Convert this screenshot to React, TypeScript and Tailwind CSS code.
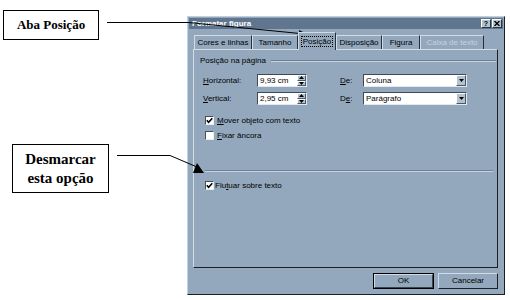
import React from "react";

const Check = ({ checked }: { checked?: boolean }) => (
  <span className="w-[9px] h-[9px] shrink-0 bg-white border border-t-[#41515f] border-l-[#41515f] border-r-[#e6edf3] border-b-[#e6edf3] flex items-center justify-center">
    {checked && (
      <svg width="7" height="7" viewBox="0 0 7 7">
        <path d="M0.8 3.2 L2.6 5.2 L6.3 1.2" stroke="#000" strokeWidth="1.6" fill="none" />
      </svg>
    )}
  </span>
);

const Arrow = ({ up }: { up?: boolean }) => (
  <svg width="5" height="3" viewBox="0 0 5 3">
    <path d={up ? "M2.5 0 L5 3 L0 3 Z" : "M0 0 L5 0 L2.5 3 Z"} fill="#000" />
  </svg>
);

const Spin = ({ value }: { value: string }) => (
  <div className="w-[50px] h-[13px] bg-white border border-t-[#3d4b59] border-l-[#3d4b59] border-r-[#e2e9f0] border-b-[#e2e9f0] flex items-center">
    <span className="flex-1 pl-[2px] leading-[10px]">{value}</span>
    <div className="flex flex-col w-[9px] h-full">
      <span className="flex-1 bg-[#b4c2d0] border-t border-l border-t-white border-l-white border-b border-r border-b-[#4a5866] border-r-[#4a5866] flex items-center justify-center">
        <Arrow up />
      </span>
      <span className="flex-1 bg-[#b4c2d0] border-t border-l border-t-white border-l-white border-b border-r border-b-[#4a5866] border-r-[#4a5866] flex items-center justify-center">
        <Arrow />
      </span>
    </div>
  </div>
);

const Select = ({ value }: { value: string }) => (
  <div className="w-[104px] h-[13px] bg-white border border-t-[#3d4b59] border-l-[#3d4b59] border-r-[#e2e9f0] border-b-[#e2e9f0] flex items-center">
    <span className="flex-1 pl-[2px] leading-[10px]">{value}</span>
    <span className="w-[10px] h-full bg-[#b4c2d0] border-t border-l border-t-white border-l-white border-b border-r border-b-[#4a5866] border-r-[#4a5866] flex items-center justify-center">
      <Arrow />
    </span>
  </div>
);

const tabs = [
  { label: "Cores e linhas", w: "w-[58px]" },
  { label: "Tamanho", w: "w-[46px]" },
  { label: "Posição", w: "w-[38px]", active: true },
  { label: "Disposição", w: "w-[46px]" },
  { label: "Figura", w: "w-[38px]" },
  { label: "Caixa de texto", w: "w-[64px]", disabled: true },
];

export default function App() {
  return (
    <div className="relative w-[510px] h-[300px] bg-white overflow-hidden font-['Liberation_Sans',sans-serif]">
      <div className="pl-[187px] pt-[16px]">
        {/* dialog window */}
        <div className="w-[318px] h-[279px] bg-[#94a8bd] border border-t-[#c3cfdb] border-l-[#c3cfdb] border-r-[#1b1f24] border-b-[#1b1f24] p-[1px] flex flex-col text-[8px] text-black">
          <div className="h-[11px] bg-[#5f768e] flex items-center justify-between pl-[3px] pr-[1px]">
            <span className="text-white font-bold leading-[10px]">Formatar figura</span>
            <div className="flex gap-[1px]">
              <span className="w-[10px] h-[9px] bg-[#b4c2d0] border border-t-white border-l-white border-r-[#2a323a] border-b-[#2a323a] flex items-center justify-center font-bold text-[7px] leading-none">
                ?
              </span>
              <span className="w-[10px] h-[9px] bg-[#b4c2d0] border border-t-white border-l-white border-r-[#2a323a] border-b-[#2a323a] flex items-center justify-center">
                <svg width="6" height="5" viewBox="0 0 6 5">
                  <path d="M0.5 0 L5.5 5 M5.5 0 L0.5 5" stroke="#000" strokeWidth="1.3" />
                </svg>
              </span>
            </div>
          </div>

          {/* tabs */}
          <div className="h-[20px] flex items-end pl-[5px] relative z-10">
            {tabs.map((t) =>
              t.active ? (
                <div
                  key={t.label}
                  className={`${t.w} h-[18px] -mb-[1px] bg-[#94a8bd] border-t border-l border-t-[#d2dce6] border-l-[#d2dce6] border-r border-r-[#26303a] flex items-center justify-center`}
                >
                  <span className="border border-dotted border-black px-[1px] leading-[9px]">{t.label}</span>
                </div>
              ) : (
                <div
                  key={t.label}
                  className={`${t.w} h-[14px] bg-[#94a8bd] border-t border-l border-t-[#d2dce6] border-l-[#d2dce6] border-r border-r-[#26303a] flex items-center justify-center ${
                    t.disabled ? "text-[#c7d2dd]" : ""
                  }`}
                >
                  {t.label}
                </div>
              )
            )}
          </div>

          {/* panel */}
          <div className="ml-[4px] w-[305px] h-[219px] border border-t-[#d2dce6] border-l-[#d2dce6] border-r-[#1b1f24] border-b-[#1b1f24] flex flex-col leading-[10px]">
            <div className="flex items-center mt-[6px] pl-[6px] pr-[1px]">
              <span>Posição na página</span>
              <div className="flex-1 ml-[5px] border-t border-t-[#6b7f94] border-b border-b-[#c8d4e0]" />
            </div>

            <div className="mt-[8px] flex flex-col gap-[5px] pl-[9px]">
              <div className="flex items-center h-[13px]">
                <span className="w-[54px]">
                  <u>H</u>orizontal:
                </span>
                <Spin value="9,93 cm" />
                <span className="ml-[33px] w-[23px]">
                  <u>D</u>e:
                </span>
                <Select value="Coluna" />
              </div>
              <div className="flex items-center h-[13px]">
                <span className="w-[54px]">
                  <u>V</u>ertical:
                </span>
                <Spin value="2,95 cm" />
                <span className="ml-[33px] w-[23px]">
                  D<u>e</u>:
                </span>
                <Select value="Parágrafo" />
              </div>
            </div>

            <div className="mt-[11px] pl-[11px] flex items-center gap-[3px] h-[9px]">
              <Check checked />
              <span>
                <u>M</u>over objeto com texto
              </span>
            </div>
            <div className="mt-[6px] pl-[11px] flex items-center gap-[3px] h-[9px]">
              <Check />
              <span>
                <u>F</u>ixar âncora
              </span>
            </div>

            <div className="mt-[30px] ml-[11px] mr-[4px] border-t border-t-[#6b7f94] border-b border-b-[#c8d4e0]" />

            <div className="mt-[9px] pl-[11px] flex items-center gap-[1px] h-[9px]">
              <Check checked />
              <span>
                Flu<u>t</u>uar sobre texto
              </span>
            </div>
          </div>

          {/* buttons */}
          <div className="mt-[5px] flex justify-end gap-[4px] pr-[5px]">
            <div className="w-[61px] h-[16px] border border-black">
              <div className="w-full h-full border border-t-[#d2dce6] border-l-[#d2dce6] border-r-[#3a4652] border-b-[#3a4652] flex items-center justify-center">
                OK
              </div>
            </div>
            <div className="w-[60px] h-[16px] border border-t-[#d2dce6] border-l-[#d2dce6] border-r-[#1b1f24] border-b-[#1b1f24] flex items-center justify-center">
              Cancelar
            </div>
          </div>
        </div>
      </div>

      {/* callouts */}
      <div className="absolute left-[3px] top-[10px] w-[96px] h-[30px] border border-black bg-white flex items-center justify-center font-['Liberation_Serif',serif] font-bold text-[13px]">
        Aba Posição
      </div>
      <div className="absolute left-[12px] top-[144px] w-[97px] h-[49px] border border-black bg-white flex flex-col items-center justify-center font-['Liberation_Serif',serif] font-bold text-[15px] leading-[19px] text-center">
        <span>Desmarcar</span>
        <span>esta opção</span>
      </div>
      <svg className="absolute inset-0 pointer-events-none" width="510" height="300" viewBox="0 0 510 300">
        <path d="M107 22.5 L188 22.5 L300 33.5" stroke="#000" strokeWidth="1" fill="none" />
        <polygon points="299,30 300,38 307,34" fill="#000" />
        <path d="M117 155.5 L170 155.5 L197 167" stroke="#000" strokeWidth="1" fill="none" />
        <polygon points="197,163 193,173 204,173" fill="#000" />
      </svg>
    </div>
  );
}
